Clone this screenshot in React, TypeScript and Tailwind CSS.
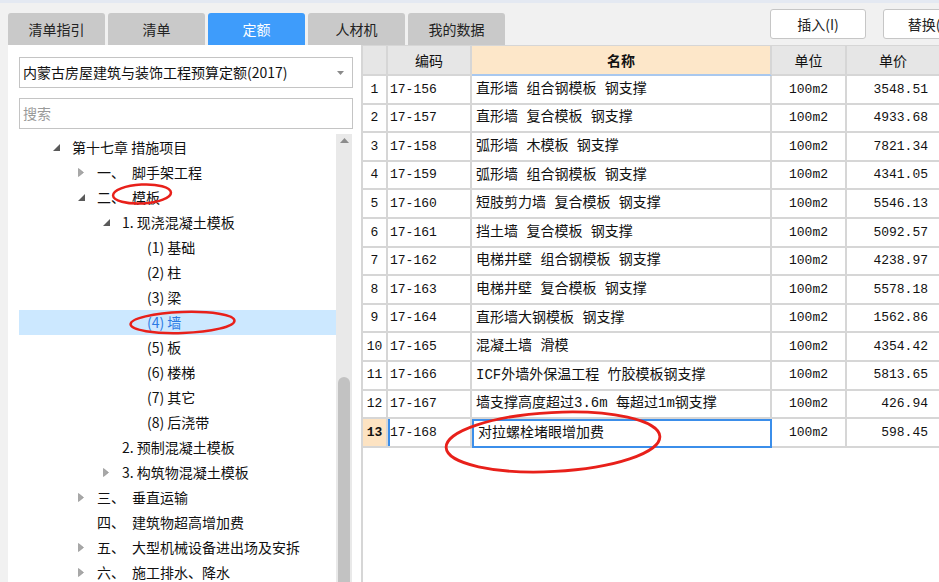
import React from 'react';

const cjk = '"Noto Sans CJK SC","Noto Sans",sans-serif';
const mono = '"Liberation Mono","Noto Sans CJK SC",monospace';

type Node = { level: number; toggle?: 'open' | 'closed'; label: string; selected?: boolean };

const tree: Node[] = [
  { level: 0, toggle: 'open', label: '第十七章 措施项目' },
  { level: 1, toggle: 'closed', label: '一、\u2002脚手架工程' },
  { level: 1, toggle: 'open', label: '二、\u2002模板' },
  { level: 2, toggle: 'open', label: '1. 现浇混凝土模板' },
  { level: 3, label: '(1) 基础' },
  { level: 3, label: '(2) 柱' },
  { level: 3, label: '(3) 梁' },
  { level: 3, label: '(4) 墙', selected: true },
  { level: 3, label: '(5) 板' },
  { level: 3, label: '(6) 楼梯' },
  { level: 3, label: '(7) 其它' },
  { level: 3, label: '(8) 后浇带' },
  { level: 2, label: '2. 预制混凝土模板' },
  { level: 2, toggle: 'closed', label: '3. 构筑物混凝土模板' },
  { level: 1, toggle: 'closed', label: '三、\u2002垂直运输' },
  { level: 1, label: '四、\u2002建筑物超高增加费' },
  { level: 1, toggle: 'closed', label: '五、\u2002大型机械设备进出场及安拆' },
  { level: 1, toggle: 'closed', label: '六、\u2002施工排水、降水' },
];

const rows = [
  ['17-156', '直形墙 组合钢模板 钢支撑', '3548.51'],
  ['17-157', '直形墙 复合模板 钢支撑', '4933.68'],
  ['17-158', '弧形墙 木模板 钢支撑', '7821.34'],
  ['17-159', '弧形墙 组合钢模板 钢支撑', '4341.05'],
  ['17-160', '短肢剪力墙 复合模板 钢支撑', '5546.13'],
  ['17-161', '挡土墙 复合模板 钢支撑', '5092.57'],
  ['17-162', '电梯井壁 组合钢模板 钢支撑', '4238.97'],
  ['17-163', '电梯井壁 复合模板 钢支撑', '5578.18'],
  ['17-164', '直形墙大钢模板 钢支撑', '1562.86'],
  ['17-165', '混凝土墙 滑模', '4354.42'],
  ['17-166', 'ICF外墙外保温工程 竹胶模板钢支撑', '5813.65'],
  ['17-167', '墙支撑高度超过3.6m 每超过1m钢支撑', '426.94'],
  ['17-168', '对拉螺栓堵眼增加费', '598.45'],
];

const tabs = ['清单指引', '清单', '定额', '人材机', '我的数据'];

function Toggle({ kind }: { kind?: 'open' | 'closed' }) {
  if (kind === 'open')
    return (
      <svg width="7" height="7" viewBox="0 0 7 7">
        <polygon points="7,0 7,7 0,7" fill="#5a5a5a" />
      </svg>
    );
  if (kind === 'closed')
    return (
      <svg width="6" height="9" viewBox="0 0 6 9">
        <polygon points="0.5,0.5 5.5,4.5 0.5,8.5" fill="#a8a8a8" stroke="#8a8a8a" strokeWidth="0.6" />
      </svg>
    );
  return null;
}

export default function App() {
  return (
    <div className="relative w-[939px] h-[582px] overflow-hidden bg-[#f1f1f1]" style={{ fontFamily: cjk }}>
      <div className="h-[3px] bg-[#e4e9f2]" />
      {/* top bar: tabs + buttons */}
      <div className="flex h-[42px] items-end pl-[8px]">
        <div className="flex gap-[3px]">
          {tabs.map((t) => (
            <div
              key={t}
              className={`w-[97px] h-[32px] rounded-t-[3px] flex items-center justify-center text-[14px] ${
                t === '定额' ? 'bg-[#3e9cfb] text-white' : 'bg-[#c9c9c9] text-[#222]'
              }`}
            >
              {t}
            </div>
          ))}
        </div>
        <div className="ml-auto self-start mt-[6px] flex gap-[17px] mr-[-40px]">
          <div className="w-[96px] h-[30px] bg-white border border-[#c6c6c6] rounded-[3px] flex items-center justify-center text-[14px] text-[#222]">
            插入(I)
          </div>
          <div className="w-[96px] h-[30px] bg-white border border-[#c6c6c6] rounded-[3px] flex items-center justify-center text-[14px] text-[#222]">
            替换(R)
          </div>
        </div>
      </div>

      <div className="flex h-[537px]">
        {/* left panel */}
        <div className="ml-[8px] w-[353px] bg-white flex flex-col pl-[11px] pr-[8px] pt-[12px]">
          <div className="h-[31px] border border-[#c4c4c4] flex items-center pl-[3px] pr-[8px] text-[14px] text-[#111]">
            <span className="flex-1">内蒙古房屋建筑与装饰工程预算定额(2017)</span>
            <svg width="7" height="4" viewBox="0 0 7 4">
              <polygon points="0,0 7,0 3.5,4" fill="#8a8a8a" />
            </svg>
          </div>
          <div className="mt-[10px] h-[31px] border border-[#c4c4c4] flex items-center pl-[3px] text-[14px] text-[#9a9a9a]">
            搜索
          </div>
          <div className="mt-[5px] flex flex-1 overflow-hidden">
            <div className="w-[317px] pt-[0.5px]">
              {tree.map((n, i) => (
                <div
                  key={i}
                  className={`h-[25px] flex items-center text-[14px] whitespace-pre ${
                    n.selected ? 'bg-[#cce8ff] text-[#2b7be4]' : 'text-[#111]'
                  }`}
                  style={{ paddingLeft: 34 + n.level * 25 }}
                >
                  <span className="w-[19px] flex items-center">
                    <Toggle kind={n.toggle} />
                  </span>
                  {n.label}
                </div>
              ))}
            </div>
            <div className="w-[16px] bg-[#e9e9e9] flex flex-col items-center pt-[4px]">
              <svg width="9" height="5" viewBox="0 0 9 5">
                <polygon points="0,5 9,5 4.5,0" fill="#8c8c8c" />
              </svg>
              <div className="mt-[234px] w-[12px] flex-1 bg-[#c2c2c2] rounded-t-full" />
            </div>
          </div>
        </div>

        {/* table */}
        <div className="ml-[0px] flex-1 bg-white border-l-2 border-[#d6d6d6] text-[14px] text-[#111]">
          <div className="grid grid-cols-[25px_84px_300px_75px_1fr] h-[31px] border-t border-[#d6d6d6]">
            <div className="bg-[#e6e6e6] border-r-2 border-b-2 border-[#d6d6d6]" />
            <div className="bg-[#e6e6e6] border-r-2 border-b-2 border-[#d6d6d6] flex items-center justify-center">编码</div>
            <div className="bg-[#fde7c9] border-r-2 border-b-2 border-b-[#a9c8ee] border-r-[#d6d6d6] flex items-center justify-center font-bold">名称</div>
            <div className="bg-[#e6e6e6] border-r-2 border-b-2 border-[#d6d6d6] flex items-center justify-center">单位</div>
            <div className="bg-[#e6e6e6] border-b-2 border-[#d6d6d6] flex items-center justify-center">单价</div>
          </div>
          {rows.map(([code, name, price], i) => {
            const sel = i === rows.length - 1;
            return (
              <div key={code} className="grid grid-cols-[25px_84px_300px_75px_1fr] h-[28.6px]">
                <div
                  className={`border-r-2 border-b-2 border-[#d6d6d6] flex items-center justify-center text-[13px] ${
                    sel ? 'bg-[#fde3c2] font-bold' : ''
                  }`}
                  style={{ fontFamily: mono }}
                >
                  {i + 1}
                </div>
                <div
                  className={`border-r-2 border-b-2 border-[#d6d6d6] flex items-center pl-[2px] text-[13px] ${
                    sel ? 'shadow-[inset_2px_0_0_#3b8eea]' : ''
                  }`}
                  style={{ fontFamily: mono }}
                >
                  {code}
                </div>
                <div
                  className={`border-r-2 border-b-2 flex items-center pl-[4px] whitespace-pre ${
                    sel ? 'border-[#3b8eea] border-l-2 border-t-2' : 'border-[#d6d6d6]'
                  }`}
                  style={{ fontFamily: mono }}
                >
                  {name}
                </div>
                <div className="border-r-2 border-b-2 border-[#d6d6d6] flex items-center justify-center text-[13px]" style={{ fontFamily: mono }}>
                  100m2
                </div>
                <div className="border-b-2 border-[#d6d6d6] flex items-center justify-end pr-[11px] text-[13px]" style={{ fontFamily: mono }}>
                  {price}
                </div>
              </div>
            );
          })}
        </div>
      </div>

      {/* red annotation marks */}
      <svg className="absolute left-0 top-0 pointer-events-none" width="939" height="582" viewBox="0 0 939 582">
        <ellipse cx="142" cy="194" rx="29" ry="9.5" fill="none" stroke="#e8201a" strokeWidth="2.5" transform="rotate(-3 142 194)" />
        <ellipse cx="182.5" cy="322.5" rx="52" ry="10.5" fill="none" stroke="#e8201a" strokeWidth="2.5" transform="rotate(-2 182.5 322.5)" />
        <ellipse cx="553" cy="442" rx="107" ry="29.5" fill="none" stroke="#e8201a" strokeWidth="2.8" transform="rotate(-3 553 442)" />
      </svg>
    </div>
  );
}
